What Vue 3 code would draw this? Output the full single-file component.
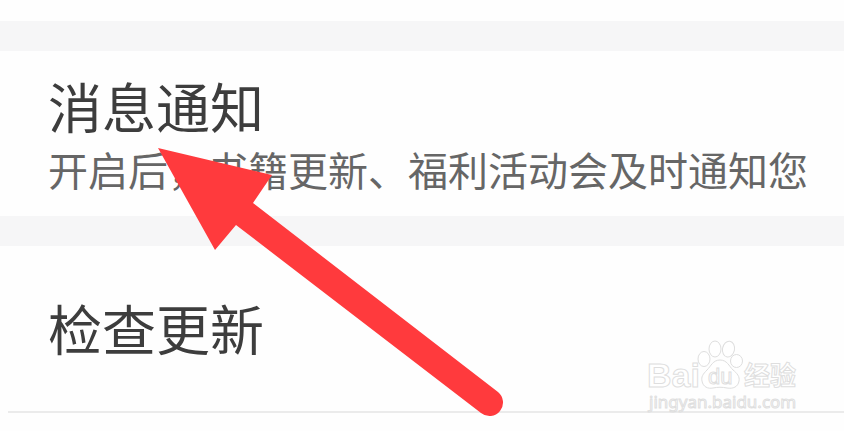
<script setup>
import { ref } from 'vue'

const notice = ref({
  title: '消息通知',
  desc: '开启后，书籍更新、福利活动会及时通知您'
})
const update = ref({ title: '检查更新' })
</script>

<template>
  <div class="settings">
    <div class="band"></div>

    <section class="row">
      <h2 class="title">{{ notice.title }}</h2>
      <p class="desc">{{ notice.desc }}</p>
    </section>

    <div class="band"></div>

    <section class="row single">
      <h2 class="title">{{ update.title }}</h2>
    </section>
    <hr class="line" />

    <!-- red pointer lying over the rows -->
    <svg class="arrow" width="360" height="280" viewBox="150 140 360 280" aria-hidden="true">
      <path d="M158 148 L272 175 L253 203 L498 392 A13.5 13.5 0 0 1 481 413 L236 225 L215 250 Z" fill="#ff3a3d" />
    </svg>

    <!-- watermark -->
    <svg class="watermark" width="160" height="80" viewBox="644 336 160 80" aria-label="Baidu经验">
      <g class="outline">
        <text class="brand" x="647" y="387">Bai</text>
        <ellipse cx="704" cy="359" rx="6" ry="7.5" />
        <ellipse cx="715" cy="349" rx="6" ry="8" />
        <ellipse cx="728.5" cy="349" rx="6" ry="8" transform="rotate(10 728 349)" />
        <ellipse cx="736.5" cy="361" rx="6" ry="6.5" />
        <path d="M720 360 C713 360 711 366 707 370 C703 374 701 377 702 381 C703 387 708 389 713 388 C718 387 722 387 727 388 C733 389 738 387 739 381 C740 377 737 373 733 370 C729 366 727 360 720 360 Z" />
        <text class="du" x="708" y="384">du</text>
        <text class="cn" x="744" y="385">经验</text>
        <text class="site" x="649" y="408">jingyan.baidu.com</text>
      </g>
    </svg>
  </div>
</template>

<style>
body {
  background: #fefefe;
}
</style>

<style scoped>
.settings {
  position: relative;
  overflow: hidden;
  padding: 21px 0 18px;
  font-family: 'Noto Sans CJK SC', 'Noto Sans', sans-serif;
}

.band {
  height: 30px;
  background: #f6f6f7;
}

.row {
  padding: 22px 0 17px 48px;
}

.row.single {
  padding: 49px 0 50px 48px;
}

.title {
  margin: 0;
  font-size: 54px;
  line-height: 66px;
  font-weight: 400;
  color: #3d3d3d;
}

.desc {
  margin: 0;
  font-size: 40px;
  line-height: 60px;
  color: #666;
  white-space: nowrap;
}

.line {
  height: 2px;
  margin: 0 0 0 8px;
  border: none;
  background: #ebebeb;
}

.arrow {
  position: absolute;
  left: 150px;
  top: 140px;
}

.watermark {
  position: absolute;
  left: 644px;
  top: 336px;
}

.outline {
  fill: #fff;
  stroke: #dedede;
  stroke-width: 1;
}

.brand {
  font: 700 34px 'Liberation Sans', sans-serif;
}

.du {
  font: 400 22px 'Liberation Sans', sans-serif;
}

.cn {
  font: 700 26px 'Noto Sans CJK SC', sans-serif;
}

.site {
  font: 400 17px 'Noto Sans', sans-serif;
}
</style>
